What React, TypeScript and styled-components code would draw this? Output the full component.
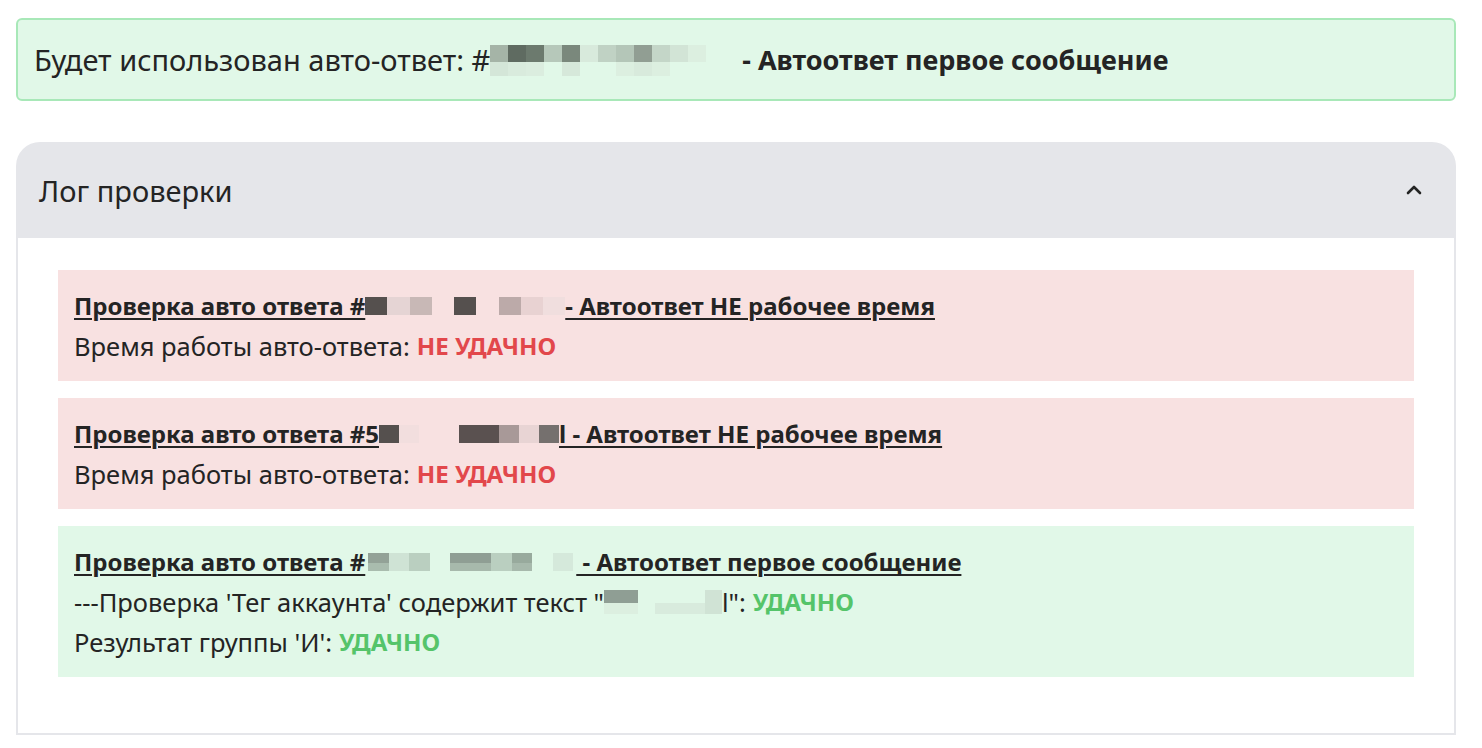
import React from "react";
import styled, { createGlobalStyle } from "styled-components";
import { ChevronUp } from "lucide-react";

const GlobalStyle = createGlobalStyle`
  html, body {
    margin: 0;
    padding: 0;
    background: #ffffff;
  }
  body {
    font-family: "Noto Sans", "Open Sans", sans-serif;
    color: #242424;
  }
`;

const Page = styled.div`
  padding: 18px 26px 12px 16px;
  display: flex;
  flex-direction: column;
  gap: 41px;
`;

const Alert = styled.div`
  background: #e1f8e8;
  border: 2px solid #a8e8b8;
  border-radius: 6px;
  padding: 20px 16px 19px;
  font-size: 29px;
  line-height: 40px;
  display: flex;
  align-items: center;
  white-space: nowrap;
`;

const Bold = styled.b`
  font-weight: 700;
  font-size: 27px;
`;

const Accordion = styled.section`
  display: flex;
  flex-direction: column;
`;

const AccordionHeader = styled.div`
  height: 96px;
  background: #e5e6ea;
  border-radius: 24px 24px 0 0;
  padding: 0 30px 0 23px;
  display: flex;
  align-items: center;
  justify-content: space-between;
  font-size: 29px;
`;

const AccordionBody = styled.div`
  border: 2px solid #e5e6ea;
  border-top: none;
  padding: 32px 40px 56px;
  display: flex;
  flex-direction: column;
  gap: 17px;
`;

const LogItem = styled.div<{ $ok: boolean }>`
  background: ${(p) => (p.$ok ? "#e1f8e8" : "#f8e1e1")};
  padding: 16px 16px 15px;
  font-size: 25.5px;
  line-height: 40px;
`;

const Line = styled.div`
  display: flex;
  align-items: center;
  white-space: nowrap;
`;

const Title = styled(Line)`
  font-size: 24px;
  font-weight: 700;
  text-decoration: underline;
  text-underline-offset: 3px;
  text-decoration-thickness: 2px;
`;

const Status = styled.b<{ $ok: boolean }>`
  font-size: 24px;
  font-weight: 700;
  color: ${(p) => (p.$ok ? "#55c46a" : "#e2474b")};
  margin-left: 7px;
`;

const Redact = styled.span<{ $w: number; $h: number; $gap?: number }>`
  display: inline-grid;
  grid-auto-flow: column;
  grid-template-rows: ${(p) => `${Math.round(p.$h * 0.55)}px ${Math.round(p.$h * 0.45)}px`};
  width: ${(p) => p.$w}px;
  margin: 0 ${(p) => p.$gap ?? 0}px;
`;

const Cell = styled.span<{ $c: string }>`
  background: ${(p) => p.$c};
`;

const Blur = ({ w, h, cells, gap }: { w: number; h: number; cells: string[]; gap?: number }) => (
  <Redact $w={w} $h={h} $gap={gap}>
    {cells.map((c, i) => (
      <Cell key={i} $c={c} />
    ))}
  </Redact>
);

const alertCells = [
  "#a5b4a7", "#d4e6d8",
  "#5f6b61", "#d9ebdd",
  "#6c7a6e", "#dbeddf",
  "#b6c8ba", "#e1f8e8",
  "#7a887c", "#d6e8da",
  "#d8eadc", "#e1f8e8",
  "#c0d2c4", "#e1f8e8",
  "#b4c6b8", "#dcefe0",
  "#919e93", "#d8eadc",
  "#c4d6c8", "#dcefe0",
  "#d2e4d6", "#e1f8e8",
  "#dcefe0", "#e1f8e8",
  "#e1f8e8", "#e1f8e8",
  "#e1f8e8", "#e1f8e8",
];

const red1 = [
  "#55504e", "#55504e",
  "#e5d4d4", "#e5d4d4",
  "#c8b8b6", "#c8b8b6",
  "#f8e1e1", "#f8e1e1",
  "#55504e", "#55504e",
  "#f8e1e1", "#f8e1e1",
  "#bcaaa9", "#bcaaa9",
  "#e8d2d2", "#e8d2d2",
  "#f0dede", "#f0dede",
];

const red2 = [
  "#55504e", "#55504e",
  "#f2dede", "#f2dede",
  "#f8e1e1", "#f8e1e1",
  "#f8e1e1", "#f8e1e1",
  "#5a5150", "#5a5150",
  "#5a5150", "#5a5150",
  "#a89998", "#a89998",
  "#e8d4d4", "#e8d4d4",
  "#75706e", "#75706e",
];

const green1 = [
  "#93a297", "#a9bcae",
  "#cfe3d5", "#cfe3d5",
  "#bacfc0", "#bacfc0",
  "#e1f8e8", "#e1f8e8",
  "#8f9e94", "#a7b9ac",
  "#8f9e94", "#a7b9ac",
  "#bacfc0", "#bacfc0",
  "#98aa9d", "#a7b9ac",
  "#e1f8e8", "#e1f8e8",
  "#d5e9db", "#d5e9db",
];

const green2 = [
  "#8f9e94", "#dcefe0",
  "#8f9e94", "#dcefe0",
  "#e1f8e8", "#e1f8e8",
  "#e1f8e8", "#d8ebdd",
  "#e1f8e8", "#d8ebdd",
  "#e1f8e8", "#d8ebdd",
  "#d0e3d5", "#d0e3d5",
];

const App = () => {
  return (
    <>
      <GlobalStyle />
      <Page>
        <Alert>
          Будет использован авто-ответ: #
          <Blur w={252} h={30} cells={alertCells} />
          <Bold>- Автоответ первое сообщение</Bold>
        </Alert>

        <Accordion>
          <AccordionHeader>
            <span>Лог проверки</span>
            <ChevronUp size={24} strokeWidth={2.6} color="#242424" />
          </AccordionHeader>
          <AccordionBody>
            <LogItem $ok={false}>
              <Title>
                Проверка авто ответа #
                <Blur w={200} h={18} cells={red1} />
                - Автоответ НЕ рабочее время
              </Title>
              <Line>
                Время работы авто-ответа:<Status $ok={false}>НЕ УДАЧНО</Status>
              </Line>
            </LogItem>

            <LogItem $ok={false}>
              <Title>
                Проверка авто ответа #5
                <Blur w={180} h={18} cells={red2} />
                l - Автоответ НЕ рабочее время
              </Title>
              <Line>
                Время работы авто-ответа:<Status $ok={false}>НЕ УДАЧНО</Status>
              </Line>
            </LogItem>

            <LogItem $ok={true}>
              <Title>
                Проверка авто ответа #
                <Blur w={205} h={18} cells={green1} gap={3} />
                &nbsp;- Автоответ первое сообщение
              </Title>
              <Line>
                ---Проверка 'Тег аккаунта' содержит текст "
                <Blur w={118} h={24} cells={green2} />
                l":<Status $ok={true}>УДАЧНО</Status>
              </Line>
              <Line>
                Результат группы 'И':<Status $ok={true}>УДАЧНО</Status>
              </Line>
            </LogItem>
          </AccordionBody>
        </Accordion>
      </Page>
    </>
  );
};

export default App;
